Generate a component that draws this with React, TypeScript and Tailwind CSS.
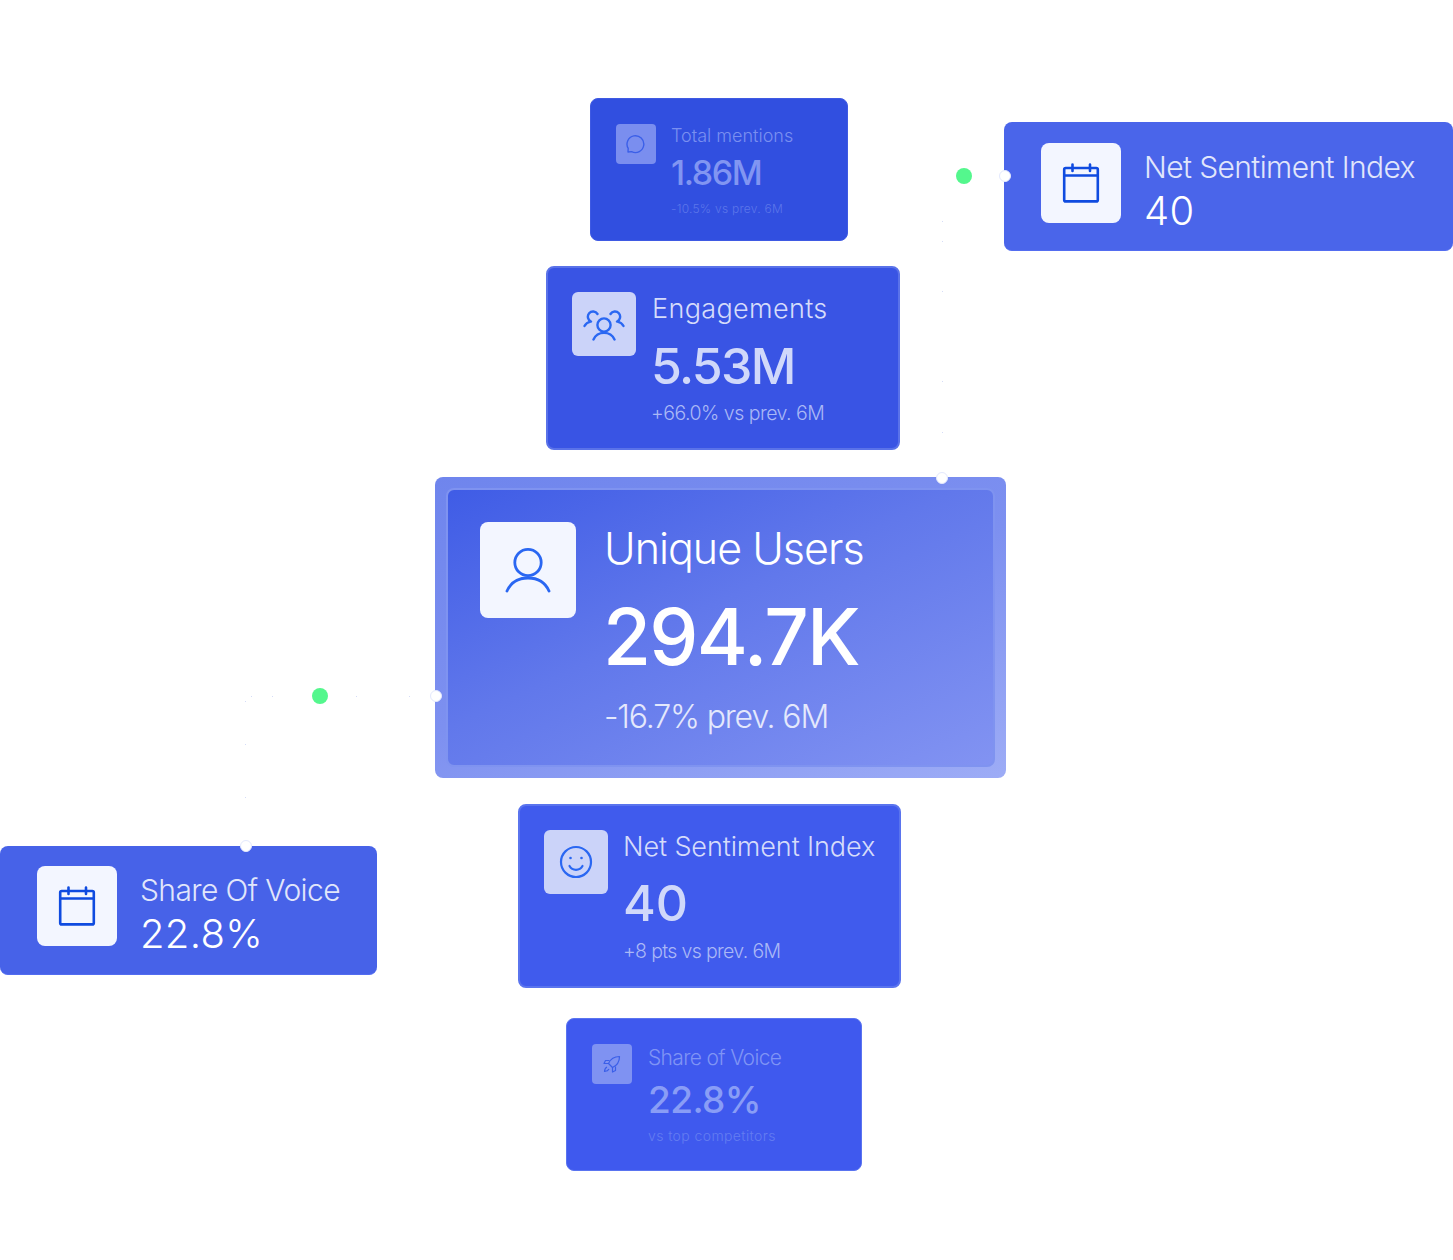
import type { ReactNode } from 'react'

function CalendarIcon() {
    return (
        <svg width="38" height="40" viewBox="0 0 38 40" fill="none" stroke="#0f4be0" strokeWidth="2.600" strokeLinejoin="round" strokeLinecap="round">
            <rect x="2.200" y="5" width="33.600" height="33.400" rx="1.500" />
            <path d="M2.200 12.500h33.600M10.500 1.500v6.500M28 1.500v6.500" />
        </svg>
    )
}

function ChatIcon() {
    return (
        <svg width="20" height="20" viewBox="0 0 20 20" fill="none" stroke="#3b5fe8" strokeWidth="1.400" strokeLinejoin="round">
            <path d="M2 18l.2-3.600A8.400 8.400 0 1 1 5.600 17.600L2 18z" />
        </svg>
    )
}

function GroupIcon() {
    return (
        <svg width="42" height="34" viewBox="0 0 42 34" fill="none" stroke="#2a67f2" strokeWidth="2.400" strokeLinecap="round">
            <circle cx="21" cy="18" r="6.600" />
            <path d="M10.500 32.500c2-4.400 6-6.600 10.500-6.600s8.500 2.200 10.500 6.600" />
            <path d="M8 14.500a5.200 5.200 0 1 1 6.500-7.500M1.500 19c1.200-2.200 3.300-3.800 6-4.400" />
            <path d="M34 14.500a5.200 5.200 0 1 0-6.500-7.500M40.500 19c-1.200-2.200-3.300-3.800-6-4.400" />
        </svg>
    )
}

function UserIcon() {
    return (
        <svg width="46" height="46" viewBox="0 0 46 46" fill="none" stroke="#2a67f2" strokeWidth="2.800" strokeLinecap="round">
            <circle cx="23" cy="15.500" r="13.200" />
            <path d="M2 44c3.500-8 11-13 21-13s17.500 5 21 13" />
        </svg>
    )
}

function SmileIcon() {
    return (
        <svg width="34" height="34" viewBox="0 0 34 34" fill="none" stroke="#2a67f2" strokeWidth="2.200" strokeLinecap="round">
            <circle cx="17" cy="17" r="15" />
            <path d="M10.500 21c1.500 2.600 3.800 3.800 6.500 3.800s5-1.200 6.500-3.800" />
            <circle cx="11.500" cy="13" r="1.300" fill="#2a67f2" stroke="none" />
            <circle cx="22.500" cy="13" r="1.300" fill="#2a67f2" stroke="none" />
        </svg>
    )
}

function RocketIcon() {
    return (
        <svg width="18" height="18" viewBox="0 0 18 18" fill="none" stroke="#3b5fe8" strokeWidth="1.200" strokeLinejoin="round">
            <path d="M5.500 8.500C7.500 4 11 1.500 16.500 1.500c0 5.500-2.500 9-7 11l-4-4z" />
            <path d="M6.500 5.500H2.500L1 8.500h4.500M12.500 11.500v4l-3 1.500v-4.500" />
            <path d="M4 12c-1.500.7-2.300 2-2.500 4.500 2.500-.2 3.800-1 4.500-2.500" />
        </svg>
    )
}

type CardProps = {
    className: string
    iconClass: string
    icon: ReactNode
    textClass: string
    title: string
    titleClass: string
    value: string
    valueClass: string
    note: string
    noteClass: string
}

function Card({ className, iconClass, icon, textClass, title, titleClass, value, valueClass, note, noteClass }: CardProps) {
    return (
        <div className={`flex items-start ${className}`}>
            <div className={`flex shrink-0 items-center justify-center ${iconClass}`}>{icon}</div>
            <div className={textClass}>
                <div className={`font-light whitespace-nowrap ${titleClass}`}>{title}</div>
                <div className={`font-medium whitespace-nowrap ${valueClass}`}>{value}</div>
                <div className={`font-light whitespace-nowrap ${noteClass}`}>{note}</div>
            </div>
        </div>
    )
}

type SideCardProps = {
    className: string
    iconClass: string
    textClass: string
    title: string
    value: string
}

function SideCard({ className, iconClass, textClass, title, value }: SideCardProps) {
    return (
        <div className={`absolute flex h-[129px] items-start rounded-lg border-b border-[#536df0] pl-[37px] ${className}`}>
            <div className={`flex h-20 w-20 shrink-0 items-center justify-center rounded-lg bg-[#f3f6ff] ${iconClass}`}>
                <CalendarIcon />
            </div>
            <div className={`ml-[23px] ${textClass}`}>
                <div className="text-[30px] font-light leading-[40px] tracking-[-0.6px] whitespace-nowrap text-[#e1e6fb]">{title}</div>
                <div className="mt-px text-[40px] font-light leading-[46px] tracking-[0.3px] text-white">{value}</div>
            </div>
        </div>
    )
}

// the dotted connectors between the cards and their status dots
function Connectors() {
    const specks = [
        [942, 221], [942, 241], [942, 291], [942, 381], [942, 432],
        [251, 696], [272, 696], [356, 696], [409, 696],
        [245, 701], [245, 744], [245, 797],
    ]
    const pins = [
        [1005, 176], [942, 478], [436, 696], [246, 846],
    ]
    return (
        <svg className="absolute inset-0" width="1453" height="1260" viewBox="0 0 1453 1260">
            {specks.map(([x, y]) => (
                <rect key={`${x}-${y}`} x={x} y={y} width="1" height="1" fill="#d5dcf7" />
            ))}
            <circle cx="964" cy="176" r="8" fill="#54f78d" />
            <circle cx="320" cy="696" r="8" fill="#54f78d" />
            {pins.map(([x, y]) => (
                <circle key={`${x}-${y}`} cx={x} cy={y} r="5.500" fill="#fff" stroke="#e3e8fd" />
            ))}
        </svg>
    )
}

export default function App() {
    return (
        <div className="relative h-[1260px] w-[1453px] overflow-hidden bg-white pt-[98px] font-['Inter',sans-serif]">
            <Card
                className="ml-[590px] h-[143px] w-[258px] rounded-lg border border-[#3f5ae3] bg-[#314fe0] pl-[25px] pt-[25px]"
                iconClass="h-10 w-10 rounded bg-[#7a8eef]"
                icon={<ChatIcon />}
                textClass="ml-[15px]"
                title="Total mentions"
                titleClass="text-[18px] leading-[24px] text-[#7a8ff0]"
                value="1.86M"
                valueClass="mt-[4px] text-[34px] leading-[42px] tracking-[-1.400px] text-[#8195f2]"
                note="-10.5% vs prev. 6M"
                noteClass="mt-[7px] text-[12px] leading-[16px] tracking-[0.25px] text-[#5c76ea]"
            />
            <Card
                className="ml-[546px] mt-[25px] h-[184px] w-[354px] rounded-lg border-2 border-[#5a72e9] bg-[#3954e4] pl-[24px] pt-[24px]"
                iconClass="h-16 w-16 rounded-md bg-[#cbd3f9]"
                icon={<GroupIcon />}
                textClass="ml-[16px]"
                title="Engagements"
                titleClass="mt-[-1px] text-[27px] leading-[36px] tracking-[0.35px] text-[#d6dcfa]"
                value="5.53M"
                valueClass="mt-[9px] ml-[-1px] text-[50px] leading-[60px] tracking-[-1.700px] text-[#d0d8fa]"
                note="+66.0% vs prev. 6M"
                noteClass="mt-[4px] ml-[-1px] text-[19.5px] leading-[26px] tracking-[-0.5px] text-[#aab8f6]"
            />
            <div className="ml-[435px] mt-[27px] h-[301px] w-[571px] rounded-lg bg-[linear-gradient(160deg,#6f85ed,#7d90f0_50%,#9dacf6)] p-[11px]">
                <Card
                    className="h-[279px] w-[549px] rounded-lg border-2 border-[#7f93f0] bg-[linear-gradient(155deg,#3f5ce6,#6178eb_45%,#8293f2)] pl-[32px] pt-[32px]"
                    iconClass="h-24 w-24 rounded-lg bg-[#f3f6ff]"
                    icon={<UserIcon />}
                    textClass="ml-[28px]"
                    title="Unique Users"
                    titleClass="mt-[-2px] text-[43px] leading-[56px] tracking-[-1px] text-white"
                    value="294.7K"
                    valueClass="mt-[15px] ml-[-1px] text-[78px] leading-[92px] tracking-[-1.700px] text-white"
                    note="-16.7% prev. 6M"
                    noteClass="mt-[13px] text-[32px] leading-[42px] tracking-[-1.150px] text-[#e4e8fc]"
                />
            </div>
            <Card
                className="ml-[518px] mt-[26px] h-[184px] w-[383px] rounded-lg border-2 border-[#5a74ee] bg-[#405bed] pl-[24px] pt-[24px]"
                iconClass="h-16 w-16 rounded-md bg-[#cbd3f9]"
                icon={<SmileIcon />}
                textClass="ml-[15px]"
                title="Net Sentiment Index"
                titleClass="mt-[-1px] text-[27px] leading-[36px] tracking-[-0.1px] text-[#d6dcfa]"
                value="40"
                valueClass="mt-[8px] text-[50px] leading-[60px] text-[#d0d8fa]"
                note="+8 pts vs prev. 6M"
                noteClass="mt-[5px] text-[19.5px] leading-[26px] tracking-[-0.650px] text-[#aab8f6]"
            />
            <Card
                className="ml-[566px] mt-[30px] h-[153px] w-[296px] rounded-lg border border-[#5a74f0] bg-[#3f59ee] pl-[25px] pt-[25px]"
                iconClass="h-10 w-10 rounded bg-[#7f92f2]"
                icon={<RocketIcon />}
                textClass="ml-[16px] mt-[1px]"
                title="Share of Voice"
                titleClass="text-[21px] leading-[26px] tracking-[-0.650px] text-[#7f94f5]"
                value="22.8%"
                valueClass="mt-[7px] text-[37px] leading-[44px] tracking-[-0.6px] text-[#899df6]"
                note="vs top competitors"
                noteClass="mt-[5px] text-[14px] leading-[18px] tracking-[0.4px] text-[#647df1]"
            />

            <SideCard
                className="left-[1004px] top-[122px] w-[449px] bg-[#4a65ea]"
                iconClass="mt-[21px]"
                textClass="mt-[25px]"
                title="Net Sentiment Index"
                value="40"
            />
            <SideCard
                className="left-0 top-[846px] w-[377px] bg-[#4762e8]"
                iconClass="mt-[20px]"
                textClass="mt-[24px]"
                title="Share Of Voice"
                value="22.8%"
            />

            <Connectors />
        </div>
    )
}
